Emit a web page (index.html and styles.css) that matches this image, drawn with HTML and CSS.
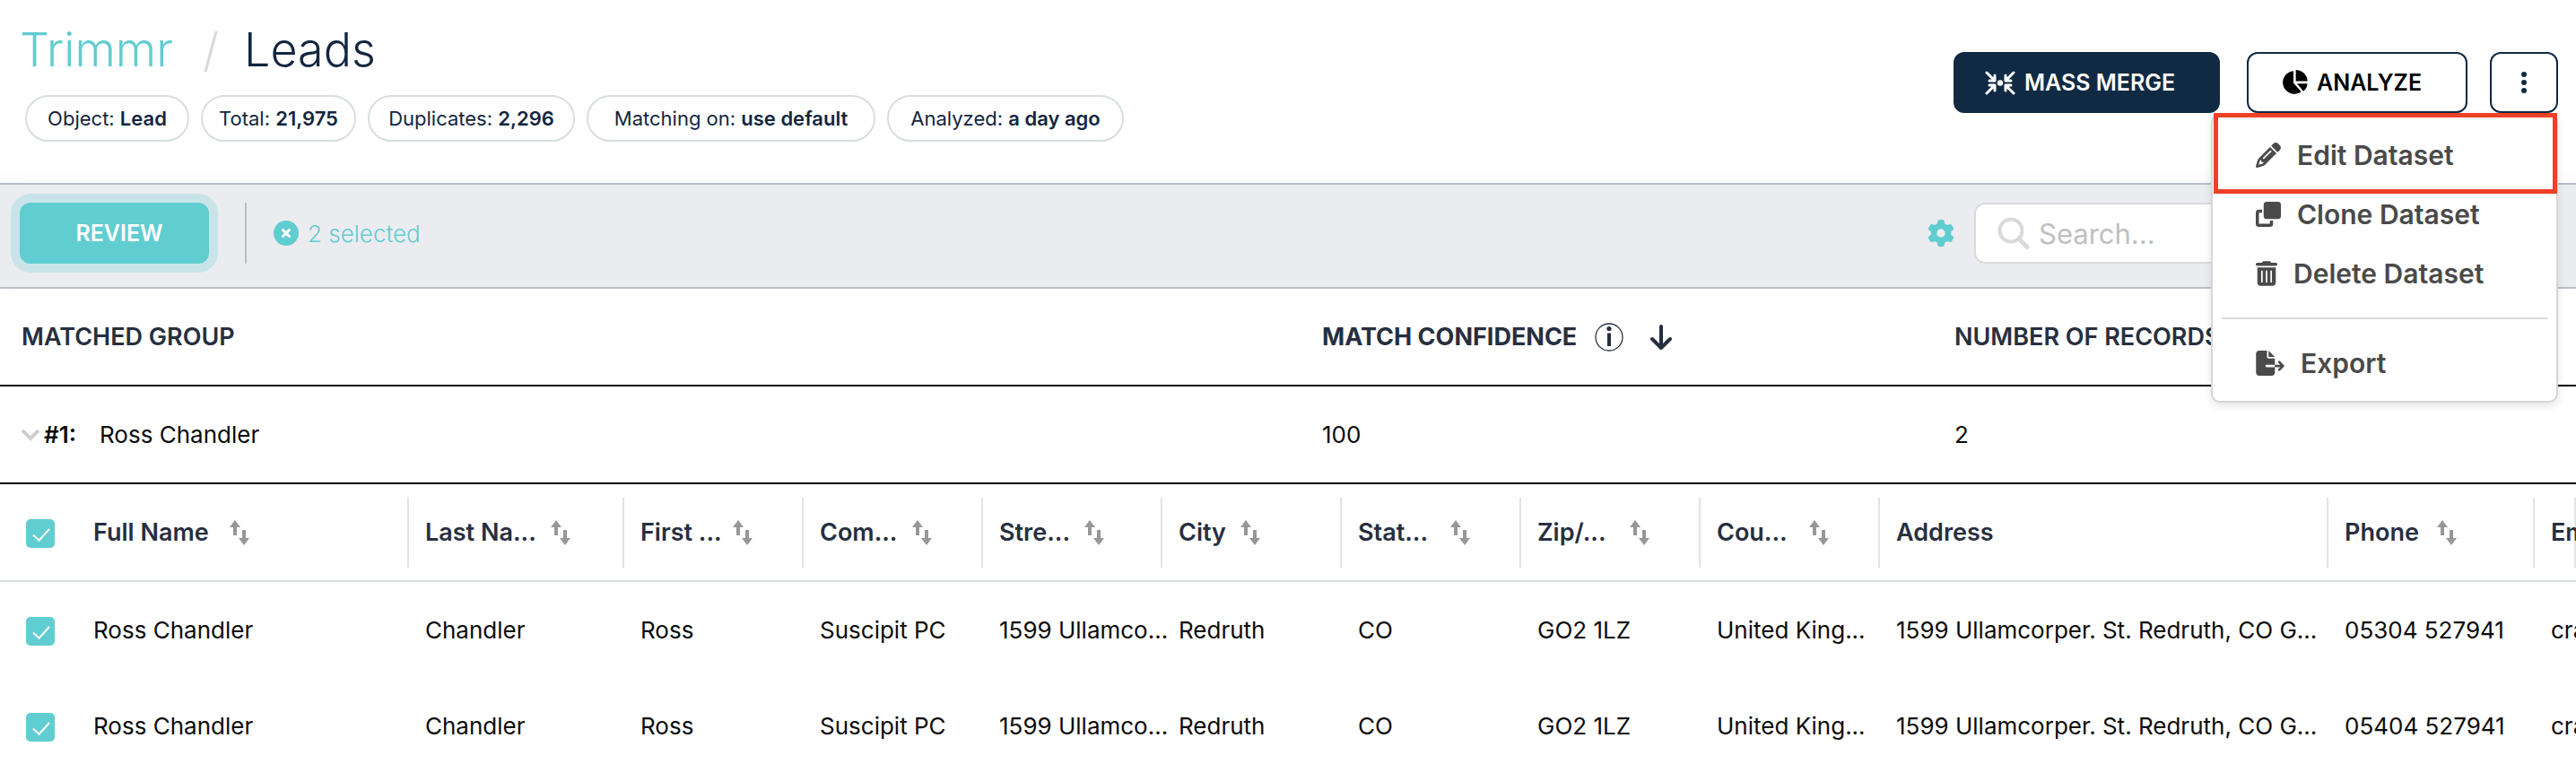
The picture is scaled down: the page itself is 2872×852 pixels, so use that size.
FILE: index.html
```html
<!DOCTYPE html>
<html lang="en">
<head>
<meta charset="utf-8">
<title>Trimmr / Leads</title>
<link rel="stylesheet" href="styles.css">
</head>
<body>
<svg class="sprite" aria-hidden="true">
  <symbol id="sort" viewBox="0 0 22 28"><path d="M6 0l6 8H8v9H4V8H0zM16 28l-6-8h4v-9h4v9h4z" fill="currentColor"/></symbol>
</svg>

<header class="page-header">
  <div class="heading">
    <h1 class="title"><a class="title-link" href="#">Trimmr</a><span class="slash">/</span><span>Leads</span></h1>
    <ul class="chips">
      <li class="chip">Object: <b>Lead</b></li>
      <li class="chip">Total: <b>21,975</b></li>
      <li class="chip">Duplicates: <b>2,296</b></li>
      <li class="chip">Matching on: <b>use default</b></li>
      <li class="chip">Analyzed: <b>a day ago</b></li>
    </ul>
  </div>
  <div class="actions">
    <button class="btn btn-primary" type="button">
      <svg width="34" height="27" viewBox="0 0 34 27" fill="none" stroke="currentColor" stroke-width="3" stroke-linecap="round" stroke-linejoin="round">
        <path d="M2 2l8 8M11 5v6H5M32 2l-8 8M23 5v6h6M2 25l8-8M11 22v-6H5M32 25l-8-8M23 22v-6h6"/>
        <circle cx="17" cy="13.5" r="3.2" fill="currentColor" stroke="none"/>
      </svg>
      MASS MERGE
    </button>
    <button class="btn btn-outline" type="button">
      <svg width="28" height="28" viewBox="0 0 28 28" fill="currentColor">
        <path d="M12 1.2V14.6l8.6 9.6A12.8 12.8 0 1 1 12 1.2z"/>
        <path d="M14.6 0A13 13 0 0 1 27.6 12.4H14.6z"/>
        <path d="M16 15.2h11.6a12 12 0 0 1-4.6 8.6z"/>
      </svg>
      ANALYZE
    </button>
    <div class="more">
      <button class="btn btn-more" type="button" aria-label="More actions" aria-expanded="true">
        <svg width="6" height="24" viewBox="0 0 6 24" fill="currentColor"><circle cx="3" cy="3" r="3"/><circle cx="3" cy="12" r="3"/><circle cx="3" cy="21" r="3"/></svg>
      </button>
      <div class="menu" role="menu">
        <button class="menu-item menu-item-marked" type="button" role="menuitem">
          <svg width="28" height="28" viewBox="0 0 512 512" fill="currentColor"><path d="M410.3 231l11.3-11.3-33.9-33.9-62.1-62.1L291.7 89.8l-11.3 11.3-22.6 22.6L58.6 322.9c-10.4 10.4-18 23.3-22.2 37.4L1 480.7c-2.5 8.4-.2 17.5 6.1 23.7s15.3 8.5 23.7 6.1l120.3-35.4c14.1-4.2 27-11.8 37.4-22.2L387.7 253.7 410.3 231zM160 399.4l-9.1 22.7c-4 3.1-8.5 5.4-13.3 6.9L59.4 452l23-78.1c1.4-4.9 3.8-9.4 6.9-13.3l22.7-9.1v32c0 8.8 7.2 16 16 16h32zM362.7 18.7L348.3 33.2 325.7 55.8 314.3 67.1l33.9 33.9 62.1 62.1 33.9 33.9 11.3-11.3 22.6-22.6 14.5-14.5c25-25 25-65.5 0-90.5L453.3 18.7c-25-25-65.5-25-90.5 0zm-47.4 168l-144 144c-6.2 6.2-16.4 6.2-22.6 0s-6.2-16.4 0-22.6l144-144c6.2-6.2 16.4-6.2 22.6 0s6.2 16.4 0 22.6z"/></svg>
          Edit Dataset
        </button>
        <button class="menu-item" type="button" role="menuitem">
          <svg width="28" height="28" viewBox="0 0 512 512" fill="currentColor"><path d="M224 0H448a64 64 0 0 1 64 64V288a64 64 0 0 1-64 64H224a64 64 0 0 1-64-64V64a64 64 0 0 1 64-64zM64 160h64v64H64V448H288V384h64v64a64 64 0 0 1-64 64H64a64 64 0 0 1-64-64V224a64 64 0 0 1 64-64z"/></svg>
          Clone Dataset
        </button>
        <button class="menu-item" type="button" role="menuitem">
          <svg width="24" height="28" viewBox="0 0 448 512" fill="currentColor"><path d="M135.2 17.7C140.6 6.8 151.7 0 163.8 0H284.2c12.1 0 23.2 6.8 28.6 17.7L320 32h96c17.7 0 32 14.3 32 32s-14.3 32-32 32H32C14.3 96 0 81.7 0 64S14.3 32 32 32h96l7.2-14.3zM32 128H416V448c0 35.3-28.7 64-64 64H96c-35.3 0-64-28.7-64-64V128zm96 64c-8.8 0-16 7.2-16 16V432c0 8.8 7.2 16 16 16s16-7.2 16-16V208c0-8.8-7.2-16-16-16zm96 0c-8.8 0-16 7.2-16 16V432c0 8.8 7.2 16 16 16s16-7.2 16-16V208c0-8.8-7.2-16-16-16zm96 0c-8.8 0-16 7.2-16 16V432c0 8.8 7.2 16 16 16s16-7.2 16-16V208c0-8.8-7.2-16-16-16z"/></svg>
          Delete Dataset
        </button>
        <hr class="menu-divider">
        <button class="menu-item" type="button" role="menuitem">
          <svg width="32" height="28" viewBox="0 0 576 512" fill="currentColor"><path d="M0 64C0 28.7 28.7 0 64 0H224V128c0 17.7 14.3 32 32 32H384V288H216c-13.3 0-24 10.7-24 24s10.7 24 24 24H384V448c0 35.3-28.7 64-64 64H64c-35.3 0-64-28.7-64-64V64zM384 336V288H494.1l-39-39c-9.4-9.4-9.4-24.6 0-33.9s24.6-9.4 33.9 0l80 80c9.4 9.4 9.4 24.6 0 33.9l-80 80c-9.4 9.4-24.6 9.4-33.9 0s-9.4-24.6 0-33.9l39-39H384zm0-208H256V0L384 128z"/></svg>
          Export
        </button>
      </div>
    </div>
  </div>
</header>

<section class="toolbar">
  <button class="btn btn-review" type="button">REVIEW</button>
  <span class="toolbar-rule"></span>
  <button class="selected" type="button">
    <svg width="28" height="28" viewBox="0 0 28 28"><circle cx="14" cy="14" r="14" fill="#60cdd0"/><path d="M10.5 10.5l7 7M17.5 10.5l-7 7" stroke="#fff" stroke-width="3" stroke-linecap="round"/></svg>
    2 selected
  </button>
  <div class="tools">
    <button class="gear" type="button" aria-label="Settings">
      <svg width="30" height="30" viewBox="0 0 512 512" fill="currentColor"><path d="M495.9 166.6c3.2 8.7 .5 18.4-6.4 24.6l-43.3 39.4c1.1 8.3 1.7 16.8 1.7 25.4s-.6 17.1-1.7 25.4l43.3 39.4c6.9 6.2 9.6 15.9 6.4 24.6c-4.4 11.9-9.7 23.3-15.8 34.3l-4.7 8.1c-6.6 11-14 21.4-22.1 31.2c-5.9 7.2-15.7 9.6-24.5 6.8l-55.7-17.7c-13.4 10.3-28.2 18.9-44 25.4l-12.5 57.1c-2 9.1-9 16.3-18.2 17.8c-13.8 2.3-28 3.5-42.5 3.5s-28.7-1.2-42.5-3.5c-9.2-1.5-16.2-8.7-18.2-17.8l-12.5-57.1c-15.8-6.5-30.6-15.1-44-25.4L83.1 425.9c-8.8 2.8-18.6 .3-24.5-6.8c-8.1-9.8-15.5-20.2-22.1-31.2l-4.7-8.1c-6.1-11-11.4-22.4-15.8-34.3c-3.2-8.7-.5-18.4 6.4-24.6l43.3-39.4C64.6 273.1 64 264.6 64 256s.6-17.1 1.7-25.4L22.4 191.2c-6.9-6.2-9.6-15.9-6.4-24.6c4.4-11.9 9.7-23.3 15.8-34.3l4.7-8.1c6.6-11 14-21.4 22.1-31.2c5.9-7.2 15.7-9.6 24.5-6.8l55.7 17.7c13.4-10.3 28.2-18.9 44-25.4l12.5-57.1c2-9.1 9-16.3 18.2-17.8C227.3 1.2 241.5 0 256 0s28.7 1.2 42.5 3.5c9.2 1.5 16.2 8.7 18.2 17.8l12.5 57.1c15.8 6.5 30.6 15.1 44 25.4l55.7-17.7c8.8-2.8 18.6-.3 24.5 6.8c8.1 9.8 15.5 20.2 22.1 31.2l4.7 8.1c6.1 11 11.4 22.4 15.8 34.3zM256 336a80 80 0 1 0 0-160 80 80 0 1 0 0 160z"/></svg>
    </button>
    <label class="search">
      <svg width="36" height="36" viewBox="0 0 36 36" fill="none" stroke="#dadada" stroke-linecap="round"><circle cx="15" cy="15" r="12.5" stroke-width="4"/><path d="M24 24.500l9 9" stroke-width="5"/></svg>
      <input class="search-input" type="search" placeholder="Search..." aria-label="Search">
    </label>
  </div>
</section>

<main class="content">
  <table class="groups">
    <colgroup><col class="col-group"><col class="col-confidence"><col></colgroup>
    <thead>
      <tr>
        <th>MATCHED GROUP</th>
        <th class="sorted">
          <div class="head">MATCH CONFIDENCE
            <svg class="info" width="32" height="32" viewBox="0 0 32 32"><circle cx="16" cy="16" r="15" fill="none" stroke="currentColor" stroke-width="1.300"/><circle cx="16" cy="6.500" r="2.600" fill="currentColor"/><path d="M16 11.500v14.500" stroke="currentColor" stroke-width="4"/></svg>
            <svg class="arrow" width="24" height="28" viewBox="0 0 24 28" fill="none" stroke="currentColor" stroke-width="4" stroke-linecap="round" stroke-linejoin="round"><path d="M12 2v23M2 16l10 10 10-10"/></svg>
          </div>
        </th>
        <th>NUMBER OF RECORDS</th>
      </tr>
    </thead>
    <tbody>
      <tr>
        <td>
          <div class="group-name">
            <svg width="20" height="14" viewBox="0 0 20 14" fill="none" stroke="#cecece" stroke-width="4"><path d="M1 2l9 9 9-9"/></svg>
            <b class="group-no">#1:</b><span>Ross Chandler</span>
          </div>
        </td>
        <td>100</td>
        <td>2</td>
      </tr>
    </tbody>
  </table>

  <table class="records">
    <colgroup>
      <col class="col-check"><col class="col-name"><col class="col-last">
      <col class="col-std"><col class="col-std"><col class="col-std"><col class="col-std"><col class="col-std"><col class="col-std"><col class="col-std">
      <col class="col-address"><col class="col-phone"><col>
    </colgroup>
    <thead>
      <tr>
        <th class="check"><input class="box" type="checkbox" checked aria-label="Select all"></th>
        <th><div class="cell-head"><span class="label-full">Full Name</span><svg class="sort"><use href="#sort"/></svg></div></th>
        <th><div class="cell-head"><span class="label-wide">Last Na...</span><svg class="sort"><use href="#sort"/></svg></div></th>
        <th><div class="cell-head"><span class="label">First ...</span><svg class="sort"><use href="#sort"/></svg></div></th>
        <th><div class="cell-head"><span class="label">Com...</span><svg class="sort"><use href="#sort"/></svg></div></th>
        <th><div class="cell-head"><span>Stre...</span><svg class="sort"><use href="#sort"/></svg></div></th>
        <th><div class="cell-head"><span>City</span><svg class="sort"><use href="#sort"/></svg></div></th>
        <th><div class="cell-head"><span class="label">Stat...</span><svg class="sort"><use href="#sort"/></svg></div></th>
        <th><div class="cell-head"><span class="label">Zip/...</span><svg class="sort"><use href="#sort"/></svg></div></th>
        <th><div class="cell-head"><span class="label">Cou...</span><svg class="sort"><use href="#sort"/></svg></div></th>
        <th><div class="cell-head">Address</div></th>
        <th><div class="cell-head"><span class="label">Phone</span><svg class="sort"><use href="#sort"/></svg></div></th>
        <th><div class="cell-head">Email</div></th>
      </tr>
    </thead>
    <tbody>
      <tr>
        <td class="check"><input class="box" type="checkbox" checked aria-label="Select record 1"></td>
        <td>Ross Chandler</td><td>Chandler</td><td>Ross</td><td>Suscipit PC</td><td>1599 Ullamco...</td><td>Redruth</td><td>CO</td><td>GO2 1LZ</td><td>United King...</td><td>1599 Ullamcorper. St. Redruth, CO G...</td><td>05304 527941</td><td>cras</td>
      </tr>
      <tr>
        <td class="check"><input class="box" type="checkbox" checked aria-label="Select record 2"></td>
        <td>Ross Chandler</td><td>Chandler</td><td>Ross</td><td>Suscipit PC</td><td>1599 Ullamco...</td><td>Redruth</td><td>CO</td><td>GO2 1LZ</td><td>United King...</td><td>1599 Ullamcorper. St. Redruth, CO G...</td><td>05404 527941</td><td>cras</td>
      </tr>
    </tbody>
  </table>
</main>
</body>
</html>
```

FILE: styles.css
```css
* { box-sizing: border-box; }

body {
  margin: 0;
  overflow: hidden;
  background: #fff;
  color: #0b0b0b;
  font-family: Inter, "Open Sans", sans-serif;
  font-size: 26px;
}

button {
  margin: 0;
  font-family: inherit;
  cursor: pointer;
}

svg { flex: none; }

.sprite {
  position: absolute;
  width: 0;
  height: 0;
}

/* Header */
.page-header {
  display: flex;
  justify-content: space-between;
  padding: 24px 20px 46px 22px;
  color: #12263f;
}

.title {
  display: flex;
  gap: 28px;
  margin: 0 0 18px;
  font-size: 52px;
  font-weight: 300;
  line-height: 64px;
}

.title-link {
  min-width: 176px;
  color: #60cdd0;
  text-decoration: none;
}

.slash { color: #dadada; }

.chips {
  display: grid;
  grid-template-columns: 183px 173px 231px 322px 264px;
  gap: 13px;
  margin: 0;
  padding: 0 0 0 6px;
  list-style: none;
}

.chip {
  height: 52px;
  border: 2px solid #d8dedd;
  border-radius: 26px;
  font-size: 22px;
  line-height: 48px;
  text-align: center;
  white-space: nowrap;
}

.chip b { font-weight: 600; }

.actions {
  display: flex;
  gap: 25px;
  padding-top: 34px;
}

.btn {
  display: flex;
  align-items: center;
  height: 68px;
  border: 2px solid #102a43;
  border-radius: 12px;
  font-size: 25px;
  font-weight: 600;
  white-space: nowrap;
}

.btn-primary {
  gap: 10px;
  width: 297px;
  margin-right: 5px;
  padding: 0 33px;
  background: #102a43;
  color: #fff;
}

.btn-outline {
  gap: 10px;
  width: 246px;
  padding: 0 38px;
  background: #fff;
  color: #000;
}

.btn-more {
  justify-content: center;
  width: 76px;
  padding: 0;
  background: #fff;
  color: #102a43;
}

.more { position: relative; }

/* Dropdown menu */
.menu {
  position: absolute;
  z-index: 2;
  top: 68px;
  right: 0;
  width: 387px;
  padding: 12px 0 9px;
  border: 2px solid #d6d6d6;
  border-radius: 10px;
  background: #fff;
  box-shadow: 0 4px 10px rgba(0, 0, 0, 0.1);
}

.menu-item {
  position: relative;
  display: flex;
  align-items: center;
  gap: 18px;
  width: 100%;
  height: 66px;
  padding: 0 48px;
  border: 0;
  background: none;
  color: #4a4a4a;
  font-size: 30px;
  font-weight: 600;
}

.menu-item-marked::after {
  content: "";
  position: absolute;
  inset: -14px -1px -10px 1px;
  border: 5px solid #ee4126;
}

.menu-divider {
  height: 2px;
  margin: 16px 10px;
  border: 0;
  background: #dadada;
}

/* Toolbar */
.toolbar {
  display: flex;
  align-items: center;
  padding: 20px 34px 26px 22px;
  border-top: 2px solid #b8bec5;
  border-bottom: 2px solid #b8bec5;
  background: #ebecf0;
  box-shadow: 0 -4px 20px rgba(0, 0, 0, 0.03);
}

.btn-review {
  justify-content: center;
  width: 211px;
  padding: 0 0 0 11px;
  border: 0;
  background: #60cdd0;
  box-shadow: 0 0 0 10px rgba(96, 205, 208, 0.25);
  color: #fff;
}

.toolbar-rule {
  width: 2px;
  height: 68px;
  margin: 0 30px 0 40px;
  background: #b8bec5;
}

.selected {
  display: flex;
  align-items: center;
  gap: 10px;
  padding: 0;
  border: 0;
  background: none;
  color: #60cdd0;
  font-size: 26px;
  font-weight: 300;
}

.tools {
  display: flex;
  align-items: center;
  gap: 22px;
  margin-left: auto;
}

.gear {
  display: flex;
  padding: 0;
  border: 0;
  background: none;
  color: #60cdd0;
}

.search {
  display: flex;
  align-items: center;
  gap: 10px;
  width: 637px;
  height: 68px;
  padding: 0 24px;
  border: 2px solid #dadada;
  border-radius: 12px;
  background: #fff;
}

.search-input {
  width: 100%;
  padding: 0;
  border: 0;
  outline: 0;
  background: none;
  font-family: inherit;
  font-size: 31px;
}

.search-input::placeholder { color: #c0c0c0; }

/* Tables */
table {
  width: 100%;
  border-collapse: separate;
  border-spacing: 0;
  table-layout: fixed;
}

th,
td {
  padding: 0;
  text-align: left;
  white-space: nowrap;
}

th {
  color: #272f3f;
  font-size: 27px;
  font-weight: 600;
}

.groups th,
.groups td {
  height: 109px;
  padding-left: 24px;
  border-bottom: 2px solid #000;
}

.groups .sorted { font-weight: 700; }

.col-group { width: 1450px; }
.col-confidence { width: 705px; }

.head,
.group-name,
.cell-head {
  display: flex;
  align-items: center;
}

.info { margin-left: 20px; }
.arrow { margin-left: 30px; }

.group-no {
  width: 62px;
  margin-left: 5px;
  font-weight: 600;
}

.records th {
  height: 109px;
  border-bottom: 2px solid #d8dedd;
}

.records td {
  height: 107px;
  padding-left: 18px;
}

.records .check {
  padding: 3px 0 0 29px;
}

.col-check { width: 86px; }
.col-name { width: 370px; }
.col-last { width: 240px; }
.col-std { width: 200px; }
.col-address { width: 500px; }
.col-phone { width: 230px; }

.cell-head {
  gap: 16px;
  height: 78px;
  padding-left: 18px;
  border-right: 2px solid #e2e2e8;
}

.label { width: 87px; }
.label-wide { width: 124px; }
.label-full { width: 136px; }

.sort {
  width: 22px;
  height: 28px;
  color: #979797;
}

.box {
  display: block;
  width: 32px;
  height: 32px;
  margin: 0;
  border-radius: 5px;
  background: #60cdd0;
  appearance: none;
}

.box:checked::after {
  content: "";
  display: block;
  width: 8px;
  height: 16px;
  margin: 6px 12px;
  border: solid #fff;
  border-width: 0 2px 2px 0;
  transform: rotate(42deg);
}
```
